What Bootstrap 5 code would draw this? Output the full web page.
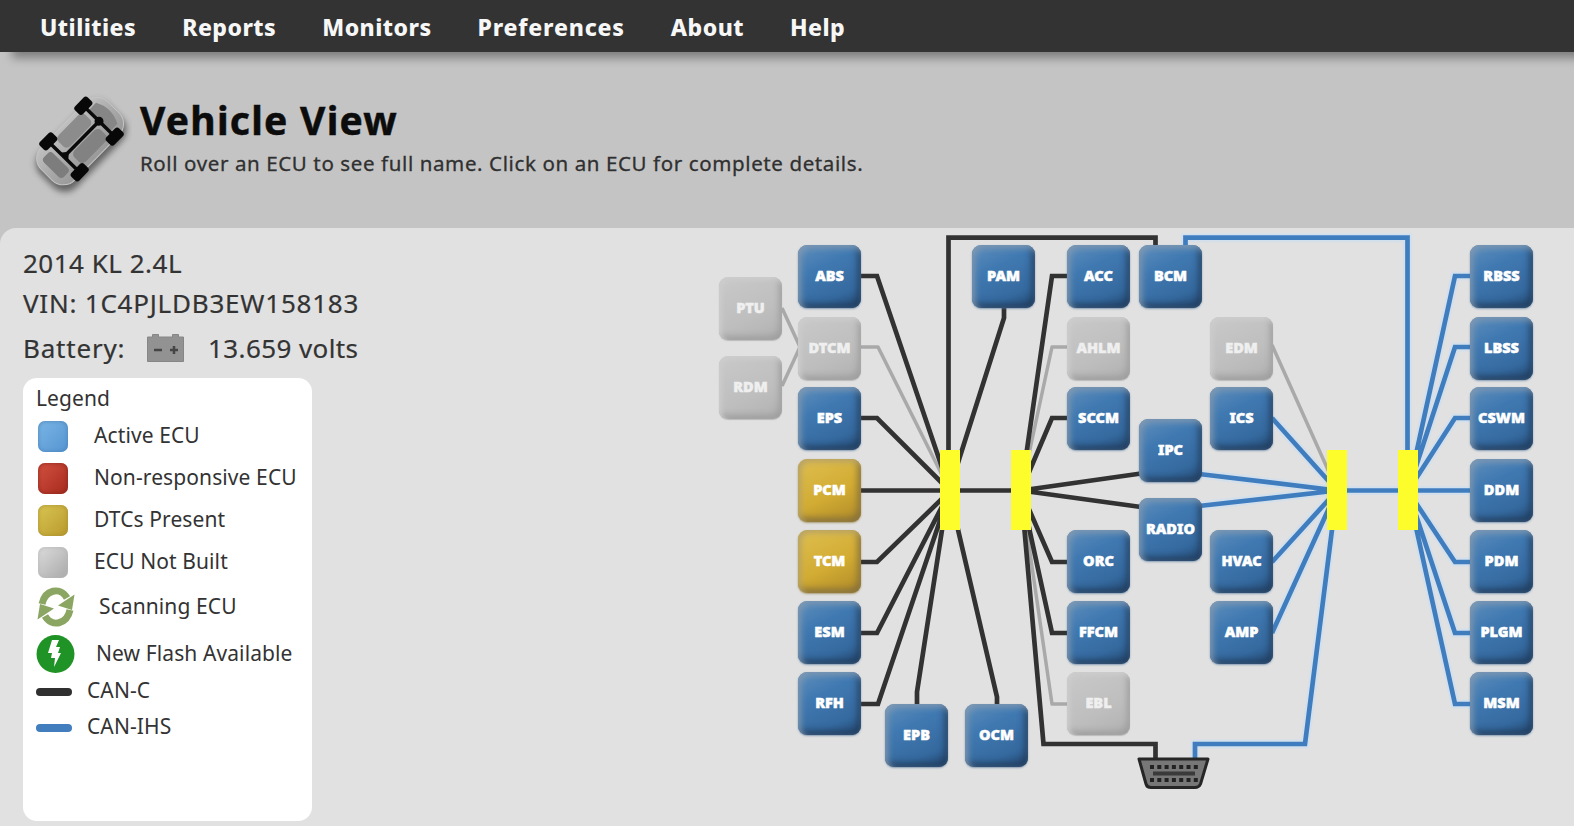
<!DOCTYPE html>
<html lang="en">
<head>
<meta charset="utf-8">
<meta name="viewport" content="width=device-width, initial-scale=1">
<title>Vehicle View</title>
<link href="https://cdn.jsdelivr.net/npm/bootstrap@5.3.0/dist/css/bootstrap.min.css" rel="stylesheet">
<style>
  html, body { height: 100%; }
  body { font-family: "Noto Sans", "Open Sans", sans-serif; background: #c4c4c4; color: #333; overflow: hidden; }
  .topbar { height: 52px; background: #333; box-shadow: 12px 6px 9px rgba(0,0,0,.36); padding: 0 0 0 40px; z-index: 2; }
  .topbar .navbar-nav { gap: 46px; }
  .topbar .navbar-nav .nav-link { color: #f7f7f7; font-weight: 800; font-size: 23px; letter-spacing: .45px; line-height: 54px; padding: 0; height: 52px; white-space: nowrap; }
  .topbar .navbar-nav .nav-wide { letter-spacing: .8px; }
  .page-head { height: 176px; padding: 36px 0 0 28px; }
  .page-head h1 { font-size: 39px; line-height: 46px; letter-spacing: 1.25px; font-weight: 700; color: #0c0c0c; margin: 9px 0 0; -webkit-text-stroke: .5px #0c0c0c; }
  .page-head p { font-size: 20.5px; line-height: 28px; letter-spacing: .61px; margin: 6px 0 0; color: #303030; -webkit-text-stroke: .3px #303030; white-space: nowrap; }
  .head-text { margin-left: 8px; }
  .panel { height: 598px; background: #e1e1e1; border-top-left-radius: 16px; }
  .side { width: 700px; padding: 15px 0 0 23px; }
  .info { font-size: 26px; line-height: 40px; white-space: nowrap; letter-spacing: .5px; -webkit-text-stroke: .2px #333; }
  .info-vin { letter-spacing: .77px; }
  .info-battery { height: 46px; padding-top: 4px; }
  .info-battery .bat { width: 124px; letter-spacing: .8px; }
  .info-battery .volts { margin-left: 24px; letter-spacing: .4px; }
  .legend-box { width: 289px; height: 443px; margin-top: 9px; border-radius: 14px; padding: 5px 0 0 13px; font-size: 21px; letter-spacing: .1px; white-space: nowrap; }
  .legend-title { height: 33px; line-height: 31px; }
  .legend-row { height: 42px; }
  .legend-icon { width: 58px; flex: none; line-height: 0; }
  .legend-row span:last-child { line-height: 36px; padding-top: 1px; }
  .row-scan { height: 46px; } .row-scan .legend-icon { width: 63px; }
  .row-flash { height: 48px; } .row-flash .legend-icon { width: 60px; }
  .row-bus { height: 36px; } .row-bus .legend-icon { width: 51px; }
  .row-bus span:last-child { margin-top: -3px; }
  .buses { margin-top: -4px; }
  .chip { display: block; width: 30px; height: 31px; margin: 5px 0 0 2px; border-radius: 7px; }
  .chip-active { background: linear-gradient(135deg, #7ab4e4, #5595d2); box-shadow: inset 0 0 4px #4b83b7; }
  .chip-dead { background: linear-gradient(135deg, #d2503f, #a62a1e); box-shadow: inset 0 0 4px #8a251c; }
  .chip-dtc { background: linear-gradient(135deg, #d8c552, #b9992c); box-shadow: inset 0 0 4px #a88f33; }
  .chip-none { background: linear-gradient(135deg, #dcdcdc, #a9a9a9); box-shadow: inset 0 0 4px #b5b5b5; }
  .dash { display: block; width: 36px; height: 8px; border-radius: 4px; }
  .dash-c { background: #303030; }
  .dash-ihs { background: #427dbd; }
  .canvas { width: 874px; height: 598px; }
  .ecu { position: absolute; width: 63px; height: 63px; border-radius: 9px; color: #fff; font-weight: 900; font-size: 14.5px; line-height: 60px; text-align: center; -webkit-text-stroke: .5px #fff; }
  .ecu-on { background: linear-gradient(155deg, #5f8fbc 0%, #4079b1 35%, #356a9f 75%, #244a75 100%); box-shadow: inset 3px 3px 6px #7f99b3, inset -3px -4px 7px #223f60, 0 1px 2px rgba(70,110,150,.6); }
  .ecu-dtc { background: linear-gradient(155deg, #dfbf50, #d2ac33 55%, #ae8928); box-shadow: inset 3px 3px 6px #b9a568, inset -3px -4px 7px #86703a, 0 1px 2px rgba(130,110,50,.6); }
  .ecu-none { background: linear-gradient(155deg, #c9c9c9, #bebebe 60%, #b0b0b0); box-shadow: inset 3px 3px 5px #cdcdcd, inset -3px -4px 6px #9f9f9f, 0 1px 1px rgba(150,150,150,.5); color: #efefef; -webkit-text-stroke-color: #efefef; }
</style>
</head>
<body>
<nav class="navbar navbar-expand topbar position-relative align-items-start">
  <div class="navbar-nav">
    <a class="nav-link" href="#">Utilities</a>
    <a class="nav-link" href="#">Reports</a>
    <a class="nav-link" href="#">Monitors</a>
    <a class="nav-link nav-wide" href="#">Preferences</a>
    <a class="nav-link" href="#">About</a>
    <a class="nav-link" href="#">Help</a>
  </div>
</nav>

<header class="page-head d-flex align-items-start">
  <svg width="104" height="110" viewBox="27 87 104 110" aria-hidden="true">
    <defs>
      <filter id="soft" x="-20%" y="-20%" width="140%" height="140%"><feGaussianBlur stdDeviation="3"/></filter>
      <linearGradient id="body" x1="0" x2="1"><stop offset="0" stop-color="#c0c0c0"/><stop offset=".5" stop-color="#aaa"/><stop offset="1" stop-color="#999"/></linearGradient>
    </defs>
    <g transform="translate(80.500 138) rotate(44.500)">
      <rect x="-20" y="-43" width="50" height="97" rx="16" fill="#444" opacity=".75" filter="url(#soft)"/>
      <rect x="-23" y="-45" width="47" height="95" rx="16" fill="url(#body)" stroke="#c6c6c6" stroke-width="1"/>
      <path d="M-15-36q15-8 30 0v10h-30z" fill="#868686"/>
      <rect x="-19" y="-20" width="16" height="38" rx="5" fill="#8c8c8c"/>
      <rect x="3" y="-20" width="16" height="38" rx="5" fill="#828282"/>
      <rect x="-14" y="30" width="28" height="13" rx="4" fill="#7d7d7d"/>
      <path d="M-22-25H22M-22 25H22M0-25V25" stroke="#0a0a0a" stroke-width="3.500" fill="none"/>
      <circle cy="-25" r="4.500" fill="#0a0a0a"/>
      <path d="M-6 25h12l-6-7z" fill="#0a0a0a"/>
      <g fill="#080808"><rect x="-27.500" y="-34" width="11" height="18" rx="3"/><rect x="16.500" y="-34" width="11" height="18" rx="3"/><rect x="-27.500" y="16" width="11" height="18" rx="3"/><rect x="16.500" y="16" width="11" height="18" rx="3"/></g>
    </g>
  </svg>
  <div class="head-text">
    <h1>Vehicle View</h1>
    <p>Roll over an ECU to see full name. Click on an ECU for complete details.</p>
  </div>
</header>

<main class="panel d-flex">
  <section class="side flex-shrink-0">
    <div class="info">2014 KL 2.4L</div>
    <div class="info info-vin">VIN: 1C4PJLDB3EW158183</div>
    <div class="info info-battery d-flex align-items-center">
      <span class="bat flex-shrink-0">Battery:</span>
      <svg class="flex-shrink-0" width="37" height="28" viewBox="0 0 37 28" aria-hidden="true">
        <path d="M.5 3h5V.5h6V3h14V.5h6V3h5v24.500H.5z" fill="#929292" stroke="#868686"/>
        <path d="M7 16h8M23 16h8M27 12v8" stroke="#454545" stroke-width="2.500"/>
      </svg>
      <span class="volts">13.659 volts</span>
    </div>

    <div class="legend-box bg-white">
      <div class="legend-title">Legend</div>
      <div class="legend-row d-flex"><span class="legend-icon"><i class="chip chip-active"></i></span><span>Active ECU</span></div>
      <div class="legend-row d-flex"><span class="legend-icon"><i class="chip chip-dead"></i></span><span>Non-responsive ECU</span></div>
      <div class="legend-row d-flex"><span class="legend-icon"><i class="chip chip-dtc"></i></span><span>DTCs Present</span></div>
      <div class="legend-row d-flex"><span class="legend-icon"><i class="chip chip-none"></i></span><span>ECU Not Built</span></div>
      <div class="row-scan d-flex align-items-center">
        <span class="legend-icon"><svg width="40" height="40" viewBox="0 0 40 40" aria-hidden="true">
          <g fill="none" stroke="#8aa662" stroke-width="7"><path d="M6 17C9 3 24-1 31 11M34 23C31 37 16 41 9 29"/></g>
          <g fill="#8aa662"><path d="M38.500 7.500L36 23L22 18.500ZM1.500 32.500L4 17L18 21.500Z"/></g>
        </svg></span><span>Scanning ECU</span>
      </div>
      <div class="row-flash d-flex align-items-center">
        <span class="legend-icon"><svg width="39" height="40" viewBox="0 0 39 40" aria-hidden="true">
          <circle cx="19.500" cy="20" r="19" fill="#209326"/><path d="M16 6h7l-3 7h4l-2 6h3l-7 14 1-9h-4l1-5h-4z" fill="#fff"/>
        </svg></span><span>New Flash Available</span>
      </div>
      <div class="buses">
        <div class="row-bus d-flex align-items-center"><span class="legend-icon"><i class="dash dash-c"></i></span><span>CAN-C</span></div>
        <div class="row-bus d-flex align-items-center"><span class="legend-icon"><i class="dash dash-ihs"></i></span><span>CAN-IHS</span></div>
      </div>
    </div>
  </section>

  <section class="canvas position-relative flex-shrink-0">
    <svg width="874" height="598" viewBox="700 228 874 598" class="d-block" aria-hidden="true">
      <g fill="none" stroke="#a9a9a9" stroke-width="3.500" stroke-linejoin="round">
        <path d="M782 308L800 347L782 386M861 347H878L950 491M1068 347H1052L1021 491M1068 704H1052L1021 491M1272 345L1337 490"/>
      </g>
      <g fill="none" stroke="#323232" stroke-width="4.700">
        <path d="M861 276H877L950 491M861 418H877L950 491M861 490.500H1021M861 562H877L950 491M861 633H877L950 491M861 704H878L950 491"/>
        <path d="M917 706V692L948 491M997 706V697L949 491M1004 305V318L949 491M948.500 491V237.700H1155.500V247"/>
        <path d="M1068 276H1052L1021 491M1068 418H1052L1021 491M1021 490.500L1141 473.500M1021 490.500L1141 507M1068 562H1052L1021 491M1068 633H1052L1021 491M1021 491L1043.500 744H1155.500V760"/>
      </g>
      <path fill="none" stroke="#c4e0fa" stroke-width="9" opacity=".45" d="M1185.500 247V237.700H1407.500V491M1337 490.500H1473M1199 474L1337 490.500L1199 506M1272 418L1337 490.500L1272 562M1337 490.500L1272 633M1195 760V744H1305L1337 490M1473 276H1455L1408 491L1455 347H1473M1473 418H1455L1408 491L1455 562H1473M1473 633H1455L1408 491L1455 704H1473"/>
      <path fill="none" stroke="#3f7dbf" stroke-width="4.700" d="M1185.500 247V237.700H1407.500V491M1337 490.500H1473M1199 474L1337 490.500L1199 506M1272 418L1337 490.500L1272 562M1337 490.500L1272 633M1195 760V744H1305L1337 490M1473 276H1455L1408 491L1455 347H1473M1473 418H1455L1408 491L1455 562H1473M1473 633H1455L1408 491L1455 704H1473"/>
      <g fill="#fdfd2c"><rect x="940" y="450" width="20" height="80"/><rect x="1011" y="450" width="20" height="80"/><rect x="1327" y="450" width="20" height="80"/><rect x="1398" y="450" width="20" height="80"/></g>
      <path d="M1139 759H1208L1200.500 784Q1199 787.500 1195 787.500H1151Q1147 787.500 1146 784Z" fill="#777" stroke="#262626" stroke-width="3" stroke-linejoin="round"/>
      <path d="M1150 767H1199M1150 780H1198" stroke="#222" stroke-width="4" stroke-dasharray="4 3.300"/>
      <path d="M1153 773.500H1195" stroke="#3a3a3a" stroke-width="4"/>
    </svg>
    <div id="nodes"></div>
  </section>
</main>

<script src="https://cdn.jsdelivr.net/npm/bootstrap@5.3.0/dist/js/bootstrap.bundle.min.js"></script>
<script>
  // name, x, y, state
  const ecus = [
    ["ABS",798,245,"on"],["PTU",719,277,"none"],["DTCM",798,317,"none"],["RDM",719,356,"none"],
    ["EPS",798,387,"on"],["PCM",798,459,"dtc"],["TCM",798,530,"dtc"],["ESM",798,601,"on"],["RFH",798,672,"on"],
    ["EPB",885,704,"on"],["OCM",965,704,"on"],["PAM",972,245,"on"],["ACC",1067,245,"on"],["BCM",1139,245,"on"],
    ["AHLM",1067,317,"none"],["SCCM",1067,387,"on"],["IPC",1139,419,"on"],["RADIO",1139,498,"on"],
    ["ORC",1067,530,"on"],["FFCM",1067,601,"on"],["EBL",1067,672,"none"],
    ["EDM",1210,317,"none"],["ICS",1210,387,"on"],["HVAC",1210,530,"on"],["AMP",1210,601,"on"],
    ["RBSS",1470,245,"on"],["LBSS",1470,317,"on"],["CSWM",1470,387,"on"],["DDM",1470,459,"on"],
    ["PDM",1470,530,"on"],["PLGM",1470,601,"on"],["MSM",1470,672,"on"]
  ];
  document.getElementById("nodes").innerHTML = ecus.map(([name, x, y, state]) =>
    `<div class="ecu ecu-${state}" style="left:${x - 700}px;top:${y - 228}px">${name}</div>`).join("");
</script>
</body>
</html>
